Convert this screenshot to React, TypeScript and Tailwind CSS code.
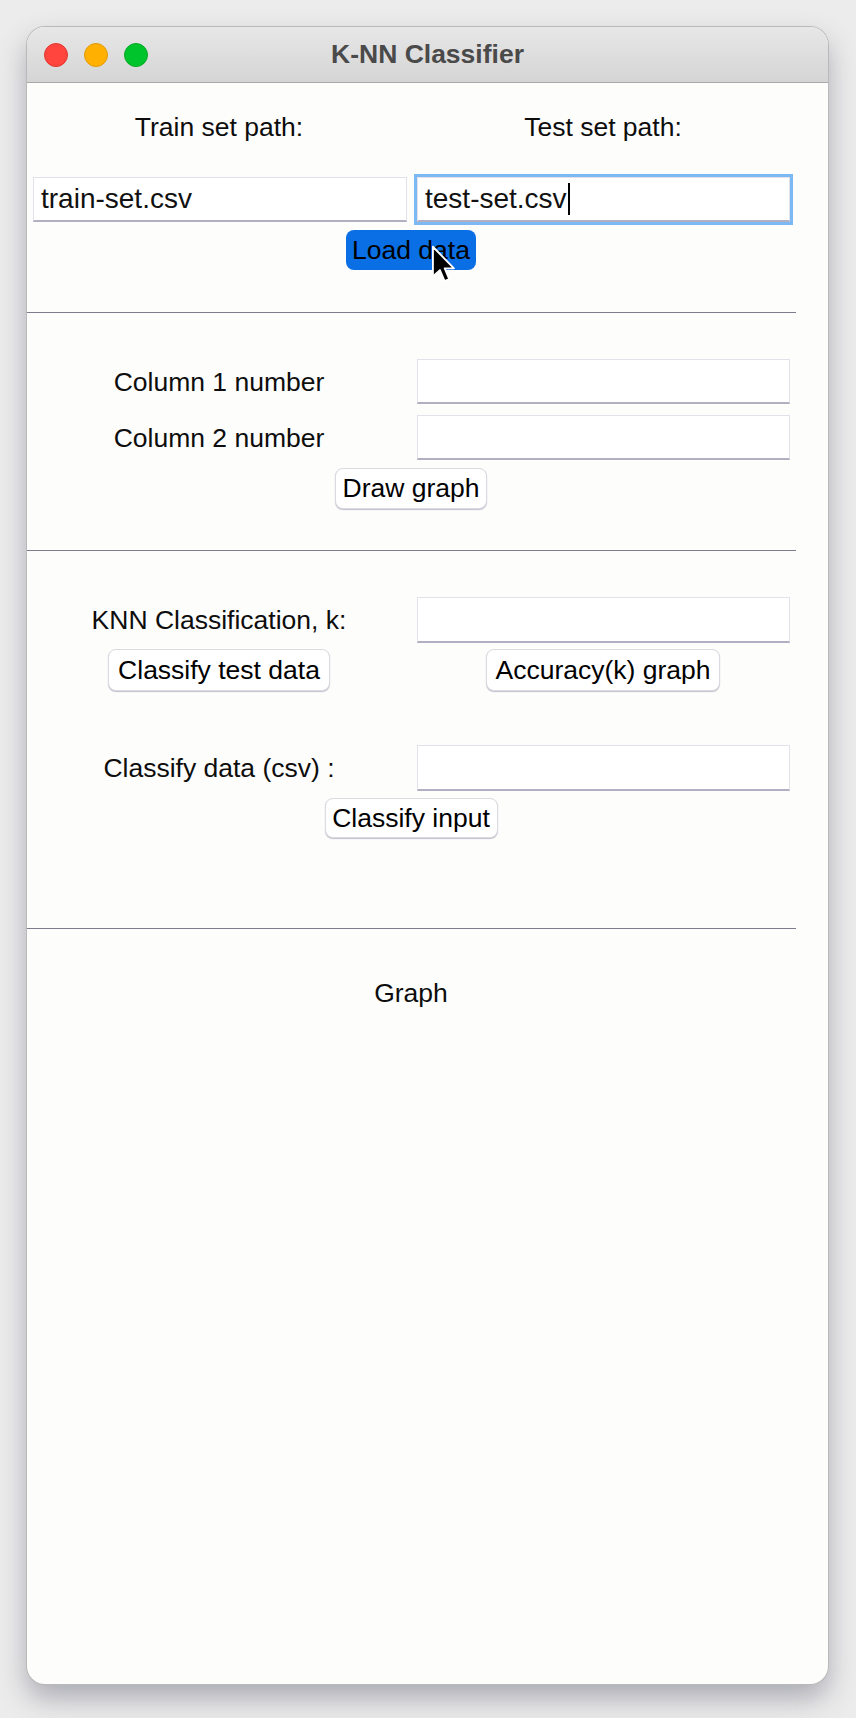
import React from 'react';

// Small Tk-style widgets for the K-NN window
function Entry({
  value = '',
  focused = false,
  caret = false,
  width = 'w-[373px]',
  height = 'h-[45px]',
}: {
  value?: string;
  focused?: boolean;
  caret?: boolean;
  width?: string;
  height?: string;
}) {
  return (
    <div
      className={`${width} ${height} ml-[6px] bg-white border border-[#e2e2ea] border-b-2 border-b-[#b0b0c2] flex items-center pl-[7px] text-[28px] text-[#111] leading-none ${
        focused ? 'outline-[3px] outline-solid outline-[#7cb8f4]' : ''
      }`}
    >
      <span>{value}</span>
      {caret && <span className="inline-block w-[2px] h-[32px] bg-black ml-[1px]" />}
    </div>
  );
}

function TkButton({
  label,
  width,
  height = 'h-[42px]',
  active = false,
}: {
  label: string;
  width: string;
  height?: string;
  active?: boolean;
}) {
  return (
    <button
      className={`${width} ${height} rounded-[8px] text-[26.5px] leading-none text-black flex items-center justify-center ${
        active
          ? 'bg-[#0a6ee4]'
          : 'bg-white border border-[#dadae0] shadow-[0_1px_1px_rgba(80,80,120,0.35)]'
      }`}
    >
      {label}
    </button>
  );
}

function Separator({ className = '' }: { className?: string }) {
  return <div className={`w-[769px] h-px bg-[#7c7c8c] ${className}`} />;
}

export default function App() {
  return (
    <div className="relative w-[856px] h-[1718px] bg-[#ececec] pt-[27px] pl-[27px] font-['Liberation_Sans',Arial,sans-serif]">
      <div className="w-[801px] h-[1657px] rounded-[18px] bg-[#fdfdfc] overflow-hidden flex flex-col shadow-[0_0_0_1px_#b9b9b9,0_14px_28px_rgba(90,90,110,0.45)]">
        {/* Title bar */}
        <div className="h-[56px] shrink-0 grid grid-cols-[1fr_auto_1fr] items-center bg-gradient-to-b from-[#e7e7e7] to-[#d5d5d5] border-b border-b-[#a9a9a9]">
          <div className="flex items-center gap-[16px] pl-[17px]">
            <span className="w-[24px] h-[24px] rounded-full bg-[#ff453d] border border-[#e0362f]" />
            <span className="w-[24px] h-[24px] rounded-full bg-[#ffb000] border border-[#e09c06]" />
            <span className="w-[24px] h-[24px] rounded-full bg-[#00c42b] border border-[#05a826]" />
          </div>
          <div className="text-[26.5px] font-bold text-[#4a4a4a] leading-none">K-NN Classifier</div>
          <div />
        </div>

        {/* Content */}
        <div className="w-[768px] flex flex-col text-[26.5px] text-[#0d0d0d] leading-[32px]">
          {/* Paths */}
          <div className="grid grid-cols-2 mt-[28px]">
            <div className="text-center">Train set path:</div>
            <div className="text-center">Test set path:</div>
          </div>
          <div className="grid grid-cols-2 mt-[34px]">
            <Entry value="train-set.csv" width="w-[374px]" />
            <Entry value="test-set.csv" focused caret />
          </div>
          <div className="flex justify-center mt-[8px]">
            <TkButton label="Load data" width="w-[130px]" height="h-[40px]" active />
          </div>

          <Separator className="mt-[42px]" />

          {/* Columns */}
          <div className="grid grid-cols-2 items-center mt-[46px]">
            <div className="text-center">Column 1 number</div>
            <Entry />
          </div>
          <div className="grid grid-cols-2 items-center mt-[11px]">
            <div className="text-center">Column 2 number</div>
            <Entry />
          </div>
          <div className="flex justify-center mt-[8px]">
            <TkButton label="Draw graph" width="w-[152px]" height="h-[41px]" />
          </div>

          <Separator className="mt-[41px]" />

          {/* Classification */}
          <div className="grid grid-cols-2 items-center mt-[46px]">
            <div className="text-center">KNN Classification, k:</div>
            <Entry height="h-[46px]" />
          </div>
          <div className="grid grid-cols-2 mt-[6px]">
            <div className="flex justify-center">
              <TkButton label="Classify test data" width="w-[222px]" />
            </div>
            <div className="flex justify-center">
              <TkButton label="Accuracy(k) graph" width="w-[234px]" />
            </div>
          </div>

          <div className="grid grid-cols-2 items-center mt-[54px]">
            <div className="text-center">Classify data (csv) :</div>
            <Entry height="h-[46px]" />
          </div>
          <div className="flex justify-center mt-[7px]">
            <TkButton label="Classify input" width="w-[173px]" height="h-[40px]" />
          </div>

          <Separator className="mt-[90px]" />

          <div className="text-center mt-[48px]">Graph</div>
        </div>
      </div>

      {/* Mouse pointer over the Load data button */}
      <svg
        className="absolute left-[431px] top-[245px]"
        width="26"
        height="42"
        viewBox="0 0 22 36"
      >
        <path
          d="M1.5 1.5 L1.5 27 L7.5 21.5 L11.5 31 L15.5 29.2 L11.6 20 L19.5 20 Z"
          fill="#000"
          stroke="#fff"
          strokeWidth="1.6"
          strokeLinejoin="round"
        />
      </svg>
    </div>
  );
}
